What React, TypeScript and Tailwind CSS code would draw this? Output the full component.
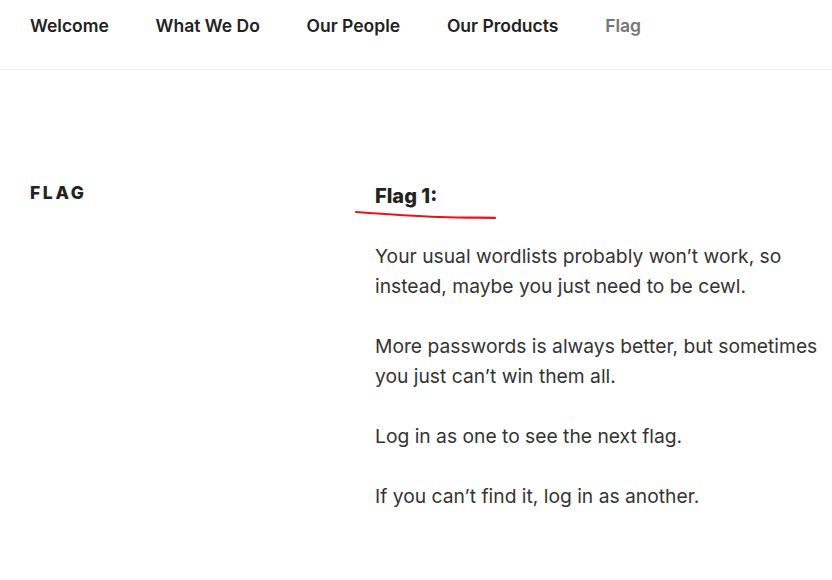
const navItems = ['Welcome', 'What We Do', 'Our People', 'Our Products']

export default function App() {
  return (
    <div className="min-h-screen bg-white font-['Inter',sans-serif] text-[#333]">
      {/* Top navigation */}
      <nav className="h-[70px] border-b border-[#eee] pl-[30px] flex items-start pt-[15px]">
        <ul className="flex gap-[46.75px] text-[17.5px] font-semibold leading-[22px] text-[#222]">
          {navItems.map((item) => (
            <li key={item}>{item}</li>
          ))}
          <li className="text-[#767676]">Flag</li>
        </ul>
      </nav>

      <main className="flex pt-[108px] pl-[30px]">
        <header className="w-[345px] shrink-0">
          <h1 className="mt-[2px] text-[17.5px] leading-[26px] font-extrabold uppercase tracking-[0.15em] text-[#222]">Flag</h1>
        </header>

        <article className="flex-1 relative">
          <h2 className="text-[20px] leading-[30px] font-extrabold text-[#222] mt-[3px]">Flag 1:</h2>
          {/* red marker underline */}
          <svg className="absolute left-[-21px] top-[31px] w-[144px] h-[12px]" viewBox="0 0 144 12" fill="none">
            <path d="M2 3 C 30 5, 60 7, 85 8 S 125 8.5, 141 8.8" stroke="#e8141b" strokeWidth="2.2" strokeLinecap="round" />
          </svg>
          <div className="mt-[30px] text-[19.25px] leading-[30px] space-y-[30px]">
            <p>Your usual wordlists probably won’t work, so instead, maybe you just need to be cewl.</p>
            <p>More passwords is always better, but sometimes you just can’t win them all.</p>
            <p>Log in as one to see the next flag.</p>
            <p>If you can’t find it, log in as another.</p>
          </div>
        </article>
      </main>
    </div>
  )
}
